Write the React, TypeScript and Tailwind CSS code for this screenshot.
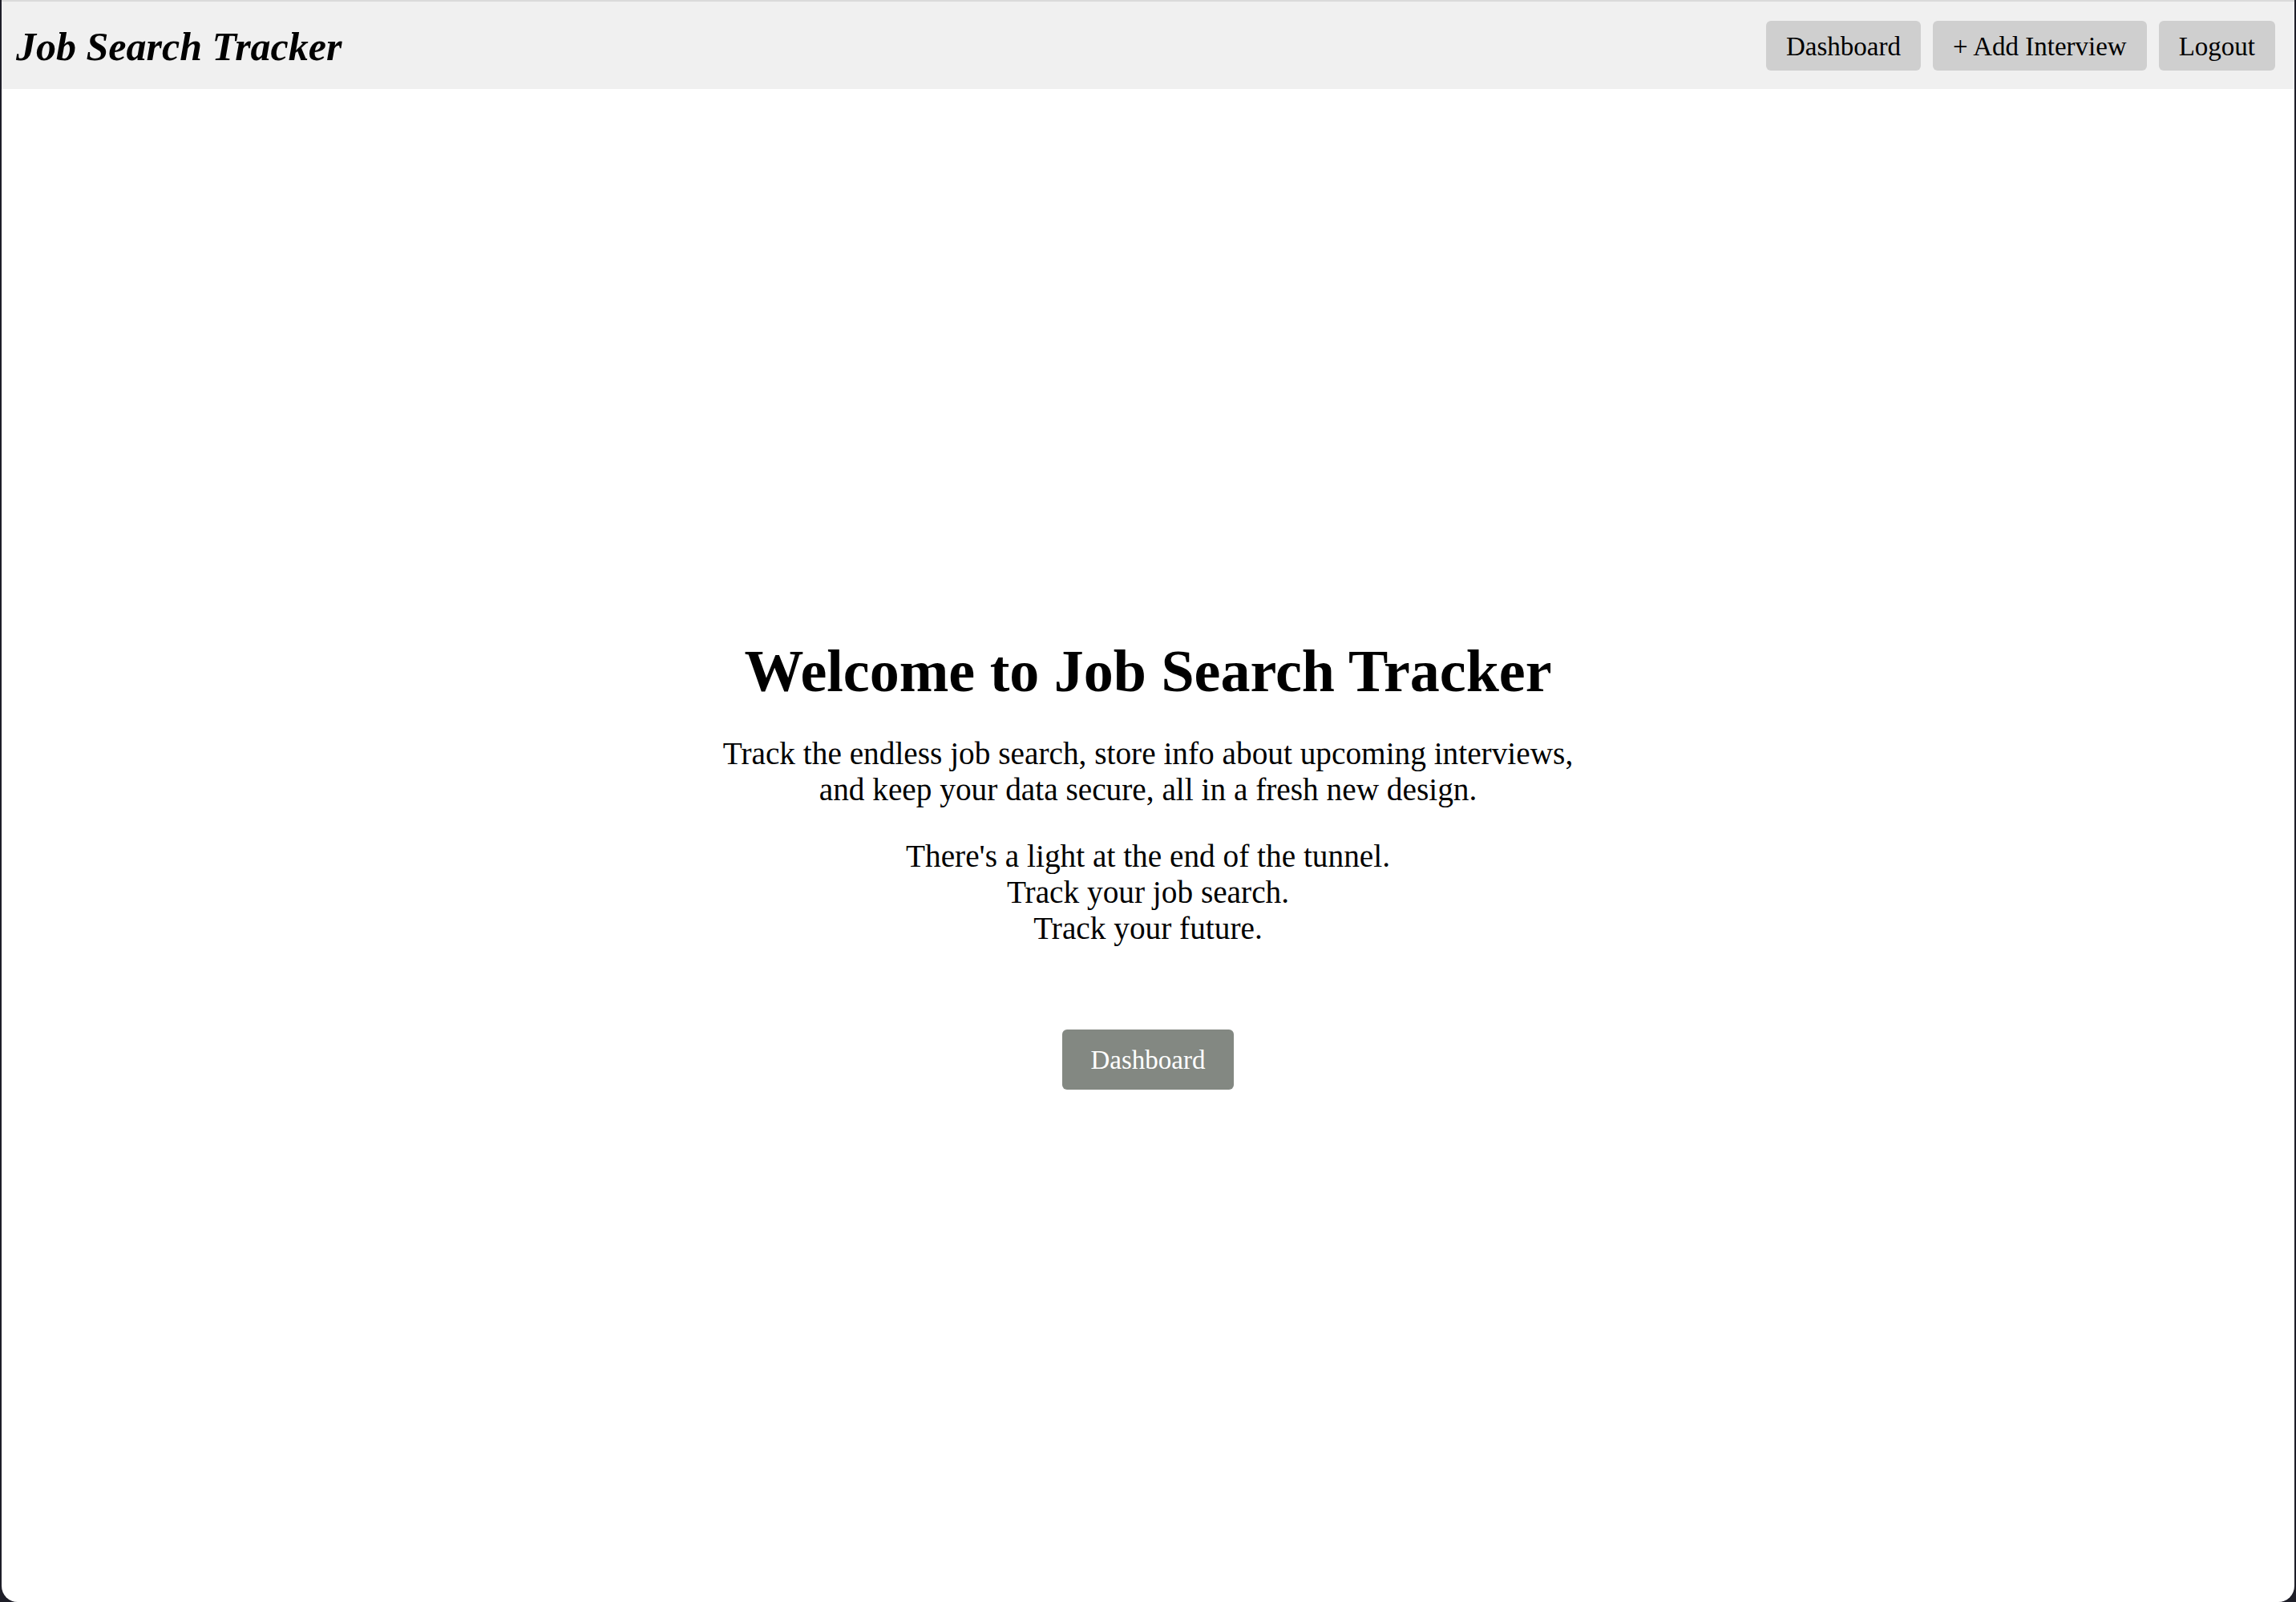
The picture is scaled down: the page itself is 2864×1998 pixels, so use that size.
const navLinks = ["Dashboard", "+\u2009Add Interview", "Logout"];

const Navbar = () => {
  return (
    <nav className="h-[111px] shrink-0 border-t-2 border-[#dadada] bg-[#f0f0f0] flex items-center justify-between pl-[18px] pr-[24px]">
      <h1 className="pt-[3px] text-[50px] leading-none font-bold italic text-black">
        Job Search Tracker
      </h1>
      <div className="flex gap-[15px]">
        {navLinks.map((label) => (
          <button
            key={label}
            className="h-[62px] px-[25px] pt-[5px] rounded-[6px] bg-[#cfcfcf] text-[33px] text-black"
          >
            {label}
          </button>
        ))}
      </div>
    </nav>
  );
};

const App = () => {
  return (
    <div className="h-screen bg-[#1e1e28] font-['Liberation_Serif',serif]">
      <div className="mx-[2px] h-full flex flex-col bg-white rounded-b-[20px] overflow-hidden">
        <Navbar />
        <main className="flex-1 flex flex-col items-center justify-center text-center text-black pt-[44px]">
          <h2 className="text-[74px] leading-[86px] font-bold">
            Welcome to Job Search Tracker
          </h2>
          <p className="mt-[38px] text-[39.3px] leading-[45px]">
            Track the endless job search, store info about upcoming interviews,
            <br />
            and keep your data secure, all in a fresh new design.
          </p>
          <p className="mt-[38px] text-[39.3px] leading-[45px]">
            There's a light at the end of the tunnel.
            <br />
            Track your job search.
            <br />
            Track your future.
          </p>
          <button className="mt-[103px] h-[75px] px-[36px] pt-[3px] rounded-[6px] bg-[#838882] text-white text-[33px]">
            Dashboard
          </button>
        </main>
      </div>
    </div>
  );
};

export default App;
